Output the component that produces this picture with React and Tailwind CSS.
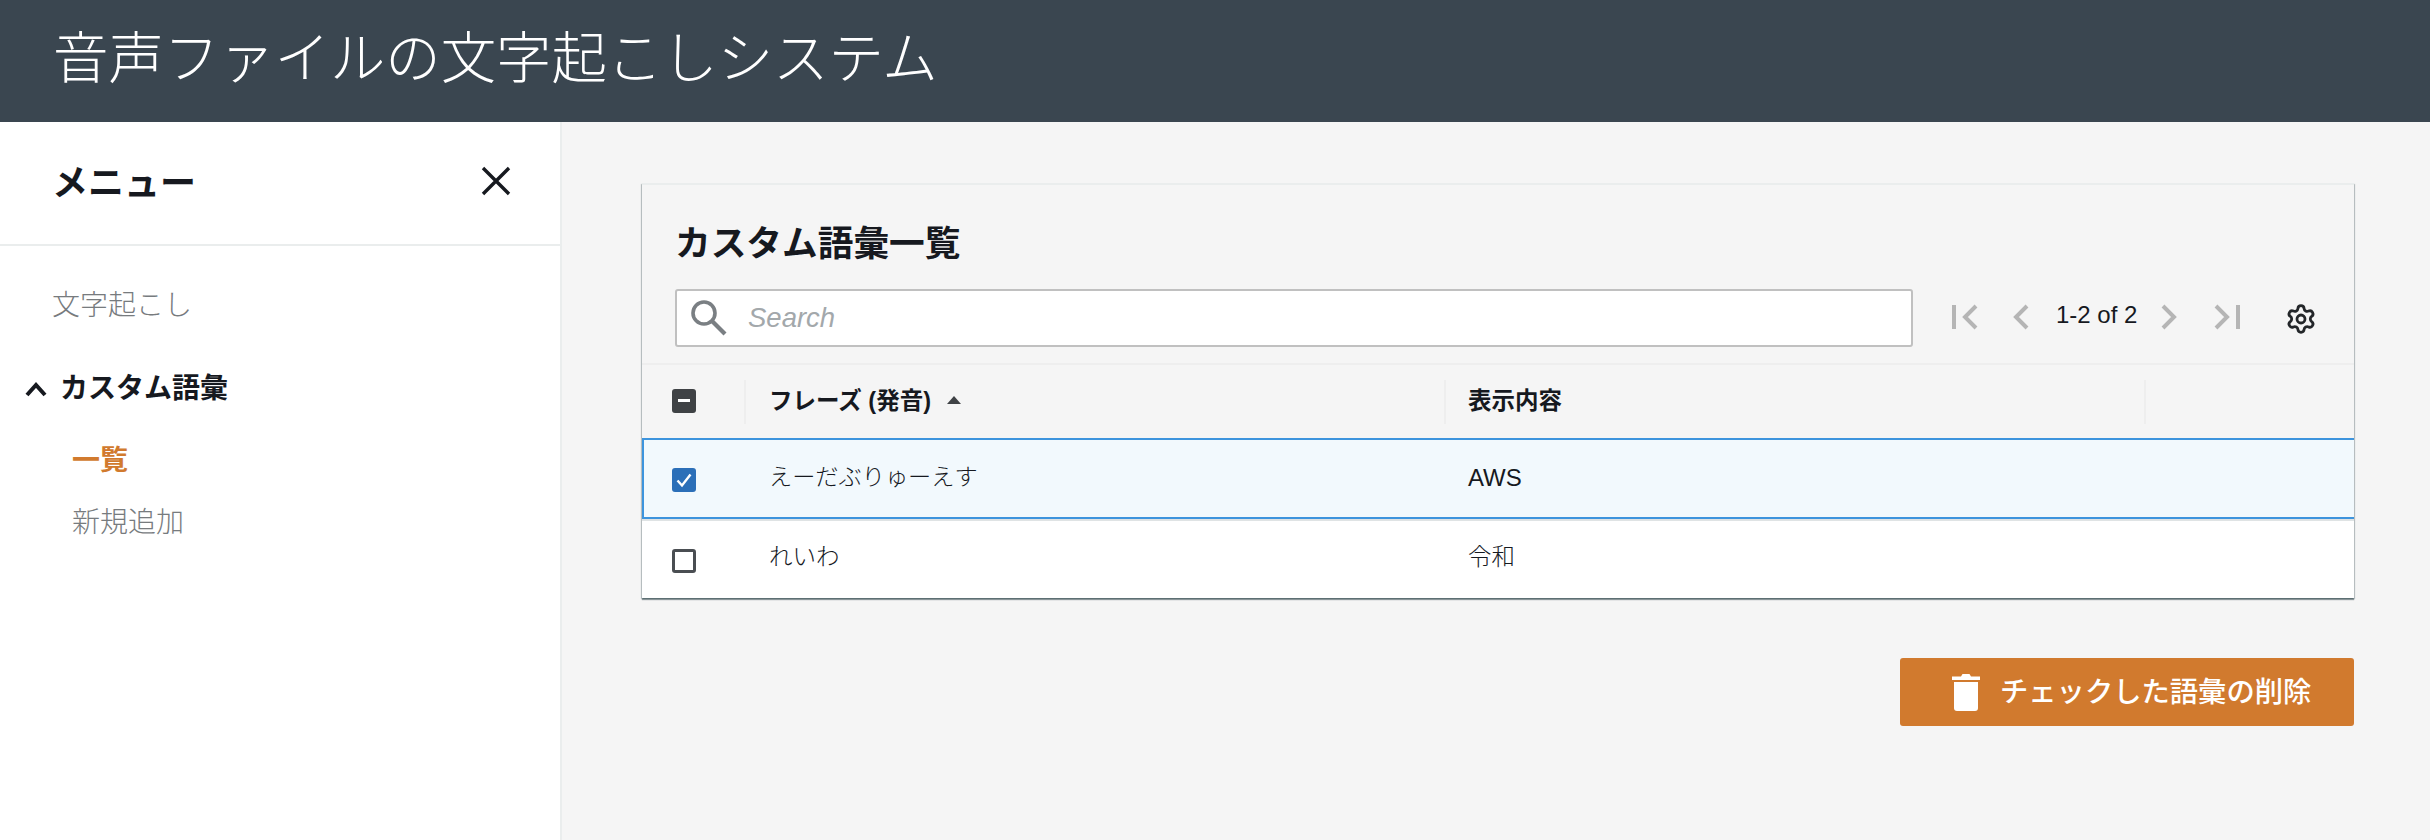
import React from 'react';
import { Settings } from 'lucide-react';

const Pager = ({ dir, bar }) => (
  <svg width="26" height="26" viewBox="0 0 26 26" className="shrink-0 -mt-[2px]" fill="none" stroke="#b5b5b5" strokeWidth="4">
    {dir === 'left' ? (
      <>
        {bar && <path d="M2 1v24" />}
        <path d={bar ? 'M24 2 13 13l11 11' : 'M20 2 9 13l11 11'} />
      </>
    ) : (
      <>
        {bar && <path d="M24 1v24" />}
        <path d={bar ? 'M2 2l11 11L2 24' : 'M6 2l11 11L6 24'} />
      </>
    )}
  </svg>
);

const Checkbox = ({ state }) => {
  if (state === 'checked') {
    return (
      <div className="w-6 h-6 rounded-[3px] bg-[#2b6fb8] flex items-center justify-center">
        <svg width="18" height="18" viewBox="0 0 18 18" fill="none" stroke="#fff" strokeWidth="2.4">
          <path d="M2.5 9.5 7 14.5 15.5 3.5" />
        </svg>
      </div>
    );
  }
  if (state === 'mixed') {
    return (
      <div className="w-6 h-6 rounded-[3px] bg-[#3f4245] flex items-center justify-center">
        <div className="w-3 h-[3px] bg-white" />
      </div>
    );
  }
  return <div className="w-6 h-6 rounded-[3px] border-[3px] border-[#4a4e52] bg-white" />;
};

const App = () => {
  return (
    <div className="h-[840px] flex flex-col overflow-hidden bg-[#f5f5f5] text-[#16191f] font-['Liberation_Sans','Noto_Sans_CJK_JP',sans-serif]">
      {/* Header */}
      <header className="h-[122px] shrink-0 bg-[#3a4650] flex items-center pl-[53px]">
        <h1 className="text-[55.4px] leading-none font-light text-white -mt-[2px]">音声ファイルの文字起こしシステム</h1>
      </header>

      <div className="flex grow min-h-0">
        {/* Sidebar */}
        <aside className="w-[562px] shrink-0 bg-white border-r-2 border-[#eaeded]">
          <div className="h-[124px] flex items-center justify-between pl-[52px] pr-[48px] border-b-2 border-[#eaeded]">
            <span className="text-[36px] font-bold leading-none mt-[2px]">メニュー</span>
            <svg width="32" height="32" viewBox="0 0 32 32" fill="none" stroke="#16191f" strokeWidth="3.4" className="mb-1">
              <path d="M3 3l26 26M29 3 3 29" />
            </svg>
          </div>
          <nav className="pt-[44px]">
            <div className="pl-[52px] text-[28px] leading-[32px] font-light text-[#777b7e]">文字起こし</div>
            <div className="flex items-center gap-[13px] pl-[25px] mt-[50px]">
              <svg width="22" height="16" viewBox="0 0 22 16" fill="none" stroke="#16191f" strokeWidth="4">
                <path d="M2 14 11 4l9 10" />
              </svg>
              <span className="text-[28px] leading-[34px] font-bold">カスタム語彙</span>
            </div>
            <div className="pl-[72px] mt-[39px] text-[28px] leading-[32px] font-bold text-[#d17a2e]">一覧</div>
            <div className="pl-[72px] mt-[30px] text-[28px] leading-[32px] font-light text-[#777b7e]">新規追加</div>
          </nav>
        </aside>

        {/* Main */}
        <main className="grow min-w-0 pl-[80px] pr-[76px] pt-[61px]">
          <section className="bg-[#f5f5f5] border-t-2 border-[#eaeded] shadow-[0_2px_1px_0_rgba(0,28,36,0.4),1px_1px_1px_0_rgba(0,28,36,0.2),-1px_1px_1px_0_rgba(0,28,36,0.2)]">
            <div className="border-b-2 border-[#eeeeee] pl-[33px] pt-[38px] pb-[16px]">
              <h2 className="text-[35.7px] leading-[42px] font-bold">カスタム語彙一覧</h2>
              <div className="flex items-center mt-[24px]">
                <div className="h-[58px] w-[1238px] shrink-0 bg-white border-2 border-[#c0c0c0] rounded-[3px] flex items-center pl-[13px]">
                  <svg width="38" height="38" viewBox="0 0 38 38" fill="none" stroke="#7a7f83" strokeWidth="3.6" className="shrink-0">
                    <circle cx="14" cy="14" r="11" />
                    <path d="M22 22l13 13" strokeWidth="4.2" />
                  </svg>
                  <span className="ml-[20px] text-[27.5px] italic text-[#a3a8ab]">Search</span>
                </div>
                <div className="flex items-center ml-[39px]">
                  <Pager dir="left" bar />
                  <div className="w-[29px]" />
                  <Pager dir="left" />
                  <span className="ml-[23px] text-[24px] leading-none mb-[6px] w-[82px] whitespace-nowrap">1-2 of 2</span>
                  <div className="w-[19px]" />
                  <Pager dir="right" />
                  <div className="w-[31px]" />
                  <Pager dir="right" bar />
                  <Settings size={32} strokeWidth={2.1} className="ml-[45px] mt-[1px] text-[#232629]" />
                </div>
              </div>
            </div>

            {/* Table header */}
            <div className="grid grid-cols-[102px_700px_700px_1fr] h-[73px] items-center">
              <div className="pl-[30px] -mt-[2px]"><Checkbox state="mixed" /></div>
              <div className="h-[44px] border-l-2 border-[#eeeeee] pl-[23px] flex items-center gap-[16px]">
                <span className="text-[23.5px] font-bold leading-none">フレーズ (発音)</span>
                <svg width="14" height="8" viewBox="0 0 14 8" fill="#3f4245" className="-mt-1"><path d="M7 0l7 8H0z" /></svg>
              </div>
              <div className="h-[44px] border-l-2 border-[#eeeeee] pl-[22px] flex items-center">
                <span className="text-[23.5px] font-bold leading-none">表示内容</span>
              </div>
              <div className="h-[44px] border-l-2 border-[#eeeeee]" />
            </div>

            {/* Rows */}
            <div className="grid grid-cols-[102px_700px_700px_1fr] h-[81px] items-center bg-[#f2f9fd] border-2 border-r-0 border-[#3d94dd]">
              <div className="pl-[28px] mt-[2px]"><Checkbox state="checked" /></div>
              <div className="pl-[23px] -mt-[2px] text-[23.2px] leading-none font-light">えーだぶりゅーえす</div>
              <div className="pl-[22px] -mt-[2px] text-[24px] leading-none">AWS</div>
            </div>
            <div className="grid grid-cols-[102px_700px_700px_1fr] h-[79px] items-center bg-white border-t-2 border-[#dfe3e4]">
              <div className="pl-[30px] mt-[2px]"><Checkbox /></div>
              <div className="pl-[25px] -mt-[3px] text-[23.5px] leading-none font-light">れいわ</div>
              <div className="pl-[24px] -mt-[3px] text-[23.5px] leading-none font-light">令和</div>
            </div>
          </section>

          <div className="flex justify-end mt-[60px]">
            <button className="w-[454px] h-[68px] bg-[#d17a2e] rounded-[3px] flex items-center pl-[52px] text-white">
              <svg width="28" height="37" viewBox="0 0 28 37" fill="#fff" className="shrink-0">
                <path d="M9 2.5 10.5 0h7L19 2.5h9v3.5H0V2.5z" />
                <path d="M2 8h24v26a3 3 0 0 1-3 3H5a3 3 0 0 1-3-3z" />
              </svg>
              <span className="ml-[20px] text-[28.3px] font-medium leading-none">チェックした語彙の削除</span>
            </button>
          </div>
        </main>
      </div>
    </div>
  );
};

export default App;
